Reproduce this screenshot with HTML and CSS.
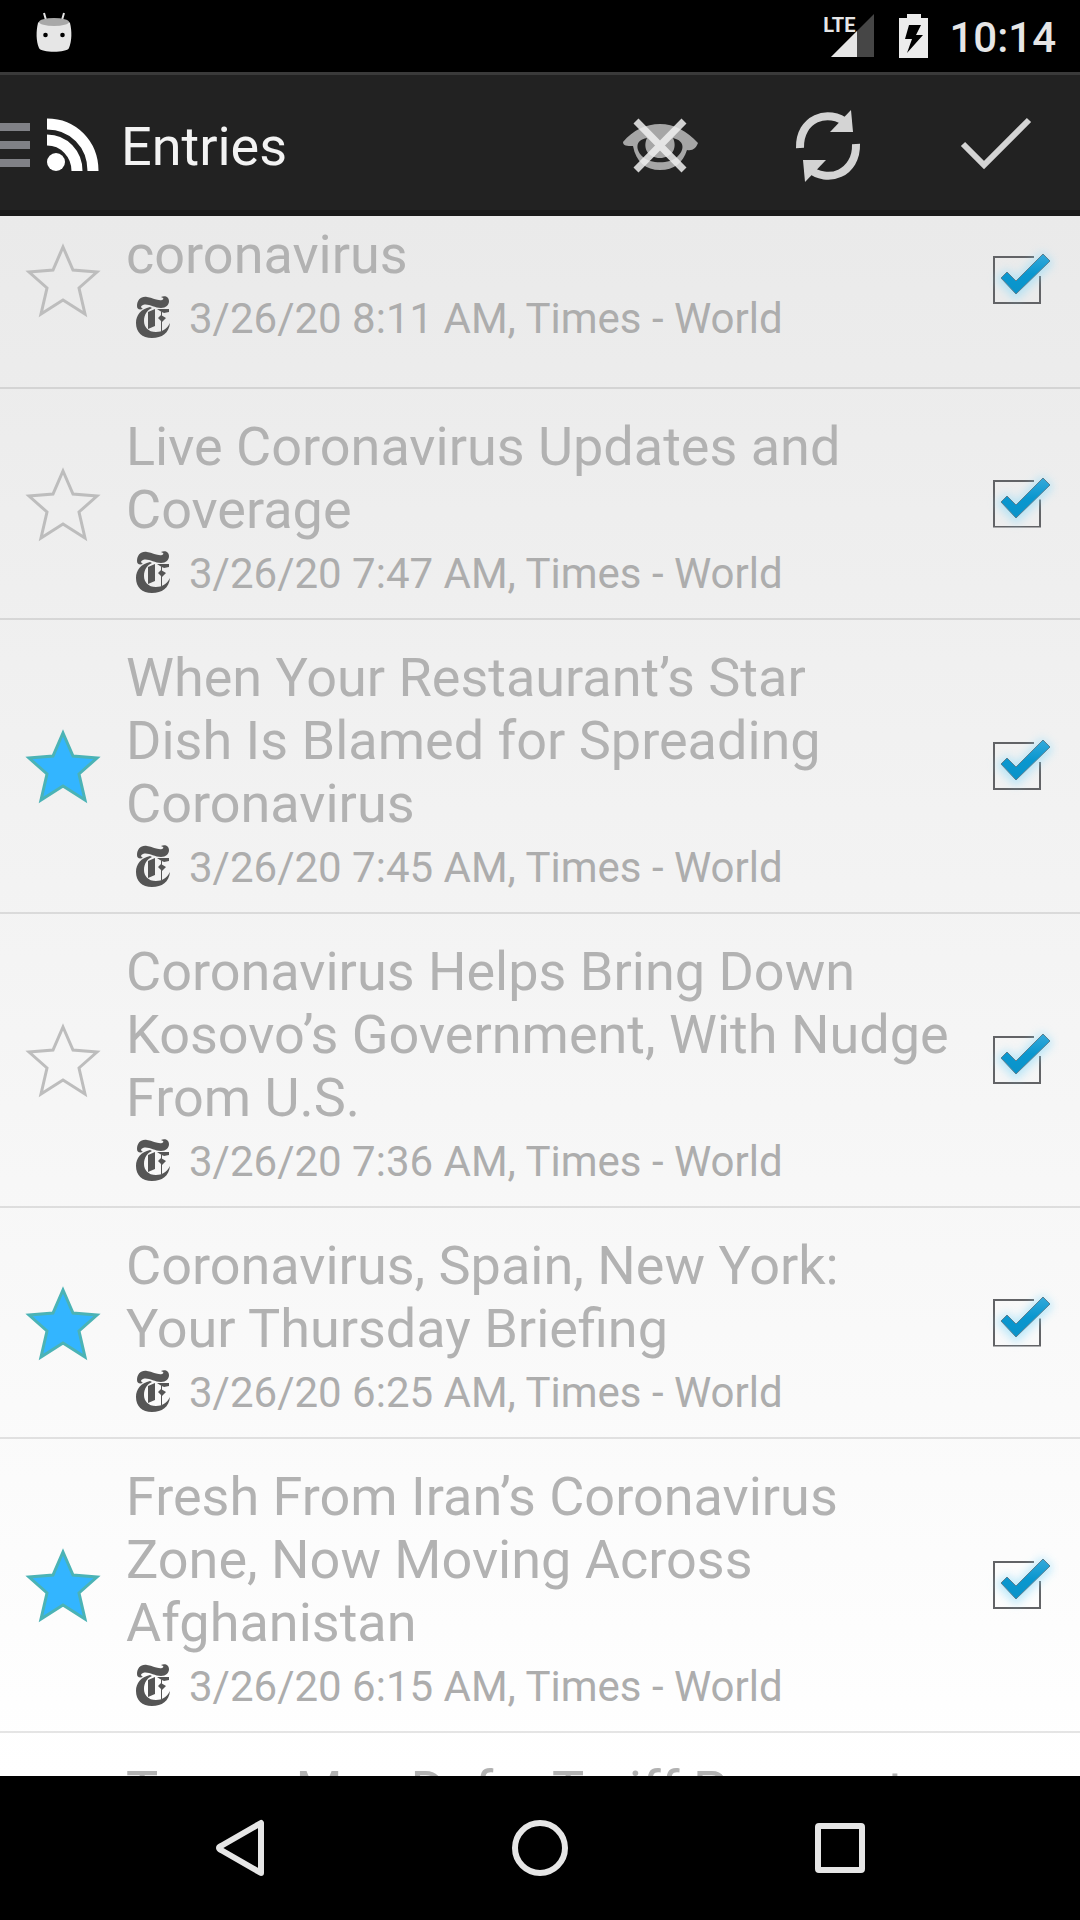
FILE: index.html
```html
<!DOCTYPE html>
<html lang="en">
<head>
<meta charset="utf-8">
<meta name="viewport" content="width=device-width, initial-scale=1">
<title>Entries</title>
<link rel="stylesheet" href="styles.css">
</head>
<body>
<svg class="defs" aria-hidden="true">
  <defs>
    <linearGradient id="tick-fill" x1="0" y1="0" x2="0" y2="1">
      <stop offset="0" stop-color="#35a9da"/><stop offset=".5" stop-color="#0a97cf"/><stop offset="1" stop-color="#0a93c9"/>
    </linearGradient>
    <filter id="glow" x="-50%" y="-50%" width="200%" height="200%"><feGaussianBlur stdDeviation="5"/></filter>
    <symbol id="star" viewBox="0 0 80 78">
      <path d="M40 6 L50 29 L74 31 L56 47 L62 73 L40 59 L18 73 L24 47 L6 31 L30 29 Z"/>
    </symbol>
    <symbol id="tick" viewBox="0 0 84 84">
      <path d="M25 41 L32 35 L41 44 L67 18 L74 25 L41 58 Z" fill="#8fdcfa" stroke="#8fdcfa" stroke-width="6" opacity=".6" filter="url(#glow)"/>
      <path d="M26 40 L32 34 L41 43 L68 16 L75 23 L41 56 Z" fill="url(#tick-fill)" stroke="#5b7f90" stroke-width="1"/>
    </symbol>
    <symbol id="times" viewBox="0 0 36 44">
      <path d="M1 11 C1 5 5 1 11 2 C17 3 22 6 26 5 C28 4 28 3 25 2 C29 0 33 2 33 6 C33 10 30 13 25 13 C18 13 12 8 7 10 C4 11 5 13 7 14 C3 15 1 14 1 11 Z"/>
      <path d="M14 12 C5 14 0 20 0 28 C0 37 6 43 16 43 C26 43 33 38 34 28 C31 34 26 37 20 37 C12 37 8 32 8 26 C8 20 11 15 16 13 Z"/>
      <path d="M12 17 L19 14 L19 31 L12 34 Z M22 23 L25 20 L30 23 L26 27 Z M25 14 h1 v22 h-1 Z M21 14 L33 14 L33 17 L28 18 L24 16 Z"/>
    </symbol>
  </defs>
</svg>
<div class="screen">
  <div class="status">
    <svg class="droid" viewBox="0 0 36 44" aria-label="Debugging">
      <path d="M8 2 L10 9 M28 2 L26 9" stroke="#e4e4e4" stroke-width="2"/>
      <path d="M2 12 C3 8 33 8 34 12 C36 20 36 30 33 37 C31 42 5 42 3 37 C0 30 0 20 2 12 Z" fill="#e6e6e6"/>
      <ellipse cx="18" cy="11" rx="15" ry="4" fill="#a8a8a8"/>
      <circle cx="9.500" cy="24" r="2.300"/><circle cx="26.500" cy="24" r="2.300"/>
    </svg>
    <div class="indicators">
      <div class="signal">
        <span class="lte">LTE</span>
        <svg class="bars" viewBox="0 0 44 44"><path d="M43 0 V43 H0 Z" fill="#464646"/><path d="M26 17 V43 H0 Z" fill="#e6e6e6"/></svg>
      </div>
      <svg class="battery" viewBox="0 0 30 44" aria-label="Charging"><path d="M8 0 H22 V4 H29 V44 H0 V4 H8 Z" fill="#ececec"/><path d="M10 11 H22 L17 21 H24 L8 39 L13 25 H6 Z" fill="#000"/></svg>
      <time class="clock">10:14</time>
    </div>
  </div>
  <header class="bar">
    <button class="drawer" aria-label="Open drawer">
      <svg class="menu" viewBox="0 0 30 44"><path d="M0 4 H30 M0 22 H30 M0 40 H30" stroke="#808186" stroke-width="8"/></svg>
      <svg class="feed" viewBox="0 0 54 56"><g fill="none" stroke="#fff" stroke-width="11"><path d="M1 7 C27 7 47 27 47 54"/><path d="M1 23 C18 23 31 37 31 54"/></g><circle cx="10" cy="45" r="9" fill="#fff"/></svg>
    </button>
    <h1 class="heading">Entries</h1>
    <div class="actions">
      <button class="action" aria-label="Hide read"><svg class="glyph" viewBox="0 0 96 96">
        <path fill="#a6a6a6" fill-rule="evenodd" d="M11 45 C21 33 34 27 48 27 C62 27 75 34 86 46 C84 51 81 54 75 53 C71 66 62 73 48 73 C34 73 24 65 21 49 C15 49 11 49 11 45 Z M35 41 C22 43 24 54 31 60 C38 67 58 67 65 60 C72 54 74 44 61 41 C66 52 59 61 48 61 C37 61 30 52 35 41 Z"/>
        <path d="M24 24 L72 73 M72 24 L24 73" stroke="#f0f0f0" stroke-opacity=".85" stroke-width="7"/></svg></button>
      <button class="action" aria-label="Refresh"><svg class="glyph" viewBox="0 0 96 96">
        <g id="half"><path d="M20 51 C19 22 48 10 68 27" fill="none" stroke="#d4d4d4" stroke-width="8"/><path d="M71 13 L73 35 H50 Z" fill="#d4d4d4"/></g>
        <use href="#half" transform="rotate(180 48 49)"/></svg></button>
      <button class="action" aria-label="Mark all read"><svg class="glyph" viewBox="0 0 96 96"><path d="M15 47 L36 68 L81 23" fill="none" stroke="#d4d4d4" stroke-width="6"/></svg></button>
    </div>
  </header>
  <main class="feedlist">
    <ul class="entries">
      <li class="entry">
        <button class="star" aria-label="Star"><svg><use href="#star"/></svg></button>
        <div class="text"><h2 class="title">coronavirus</h2><p class="meta"><svg class="logo"><use href="#times"/></svg>3/26/20 8:11 AM, Times - World</p></div>
        <label class="check"><input type="checkbox" checked aria-label="Read"><svg><use href="#tick"/></svg></label>
      </li>
      <li class="entry">
        <button class="star" aria-label="Star"><svg><use href="#star"/></svg></button>
        <div class="text"><h2 class="title">Live Coronavirus Updates and<br>Coverage</h2><p class="meta"><svg class="logo"><use href="#times"/></svg>3/26/20 7:47 AM, Times - World</p></div>
        <label class="check"><input type="checkbox" checked aria-label="Read"><svg><use href="#tick"/></svg></label>
      </li>
      <li class="entry">
        <button class="star on" aria-label="Unstar"><svg><use href="#star"/></svg></button>
        <div class="text"><h2 class="title">When Your Restaurant’s Star<br>Dish Is Blamed for Spreading<br>Coronavirus</h2><p class="meta"><svg class="logo"><use href="#times"/></svg>3/26/20 7:45 AM, Times - World</p></div>
        <label class="check"><input type="checkbox" checked aria-label="Read"><svg><use href="#tick"/></svg></label>
      </li>
      <li class="entry">
        <button class="star" aria-label="Star"><svg><use href="#star"/></svg></button>
        <div class="text"><h2 class="title">Coronavirus Helps Bring Down<br>Kosovo’s Government, With Nudge<br>From U.S.</h2><p class="meta"><svg class="logo"><use href="#times"/></svg>3/26/20 7:36 AM, Times - World</p></div>
        <label class="check"><input type="checkbox" checked aria-label="Read"><svg><use href="#tick"/></svg></label>
      </li>
      <li class="entry">
        <button class="star on" aria-label="Unstar"><svg><use href="#star"/></svg></button>
        <div class="text"><h2 class="title">Coronavirus, Spain, New York:<br>Your Thursday Briefing</h2><p class="meta"><svg class="logo"><use href="#times"/></svg>3/26/20 6:25 AM, Times - World</p></div>
        <label class="check"><input type="checkbox" checked aria-label="Read"><svg><use href="#tick"/></svg></label>
      </li>
      <li class="entry">
        <button class="star on" aria-label="Unstar"><svg><use href="#star"/></svg></button>
        <div class="text"><h2 class="title">Fresh From Iran’s Coronavirus<br>Zone, Now Moving Across<br>Afghanistan</h2><p class="meta"><svg class="logo"><use href="#times"/></svg>3/26/20 6:15 AM, Times - World</p></div>
        <label class="check"><input type="checkbox" checked aria-label="Read"><svg><use href="#tick"/></svg></label>
      </li>
      <li class="entry partial">
        <div class="star"></div>
        <div class="text"><h2 class="title">Trump May Defer Tariff Payments</h2></div>
      </li>
    </ul>
  </main>
  <nav class="nav">
    <button class="key" aria-label="Back"><svg viewBox="0 0 60 60"><path d="M51 5 V55 L11 32 Q7 30 11 28 Z"/></svg></button>
    <button class="key" aria-label="Home"><svg viewBox="0 0 60 60"><circle cx="30" cy="30" r="25"/></svg></button>
    <button class="key" aria-label="Recents"><svg viewBox="0 0 60 60"><rect x="8" y="8" width="44" height="44" rx="1"/></svg></button>
  </nav>
</div>
</body>
</html>
```
FILE: styles.css
```css
* { box-sizing: border-box; margin: 0; padding: 0; }
body { font-family: Roboto, sans-serif; background: #000; }
button { background: none; border: 0; display: flex; align-items: center; justify-content: center; }
svg { display: block; flex: none; }
.defs { position: absolute; width: 0; height: 0; }
.screen { display: flex; flex-direction: column; height: 100vh; overflow: hidden; }

.status { display: flex; flex: none; justify-content: space-between; align-items: center; height: 72px; padding: 0 24px 0 36px; }
.droid { width: 36px; height: 44px; margin-bottom: 6px; }
.indicators { display: flex; align-items: center; }
.signal { display: flex; align-items: flex-start; }
.lte { font-size: 20px; line-height: 22px; font-weight: 700; color: #e6e6e6; margin-right: -24px; }
.bars { width: 44px; height: 44px; }
.battery { width: 30px; height: 44px; margin: 0 20px 0 24px; }
.clock { padding-top: 4px; font-size: 42px; line-height: 48px; font-weight: 500; color: #e6e6e6; }

.bar { display: flex; flex: none; align-items: center; height: 144px; padding-top: 5px; background: #222; border-top: 3px solid #3a3a3a; border-bottom: 6px solid #1a1a1a; }
.drawer { gap: 16px; }
.menu { width: 30px; height: 44px; }
.feed { width: 54px; height: 56px; }
.heading { flex: 1; padding: 4px 0 0 21px; font-size: 54px; line-height: 64px; font-weight: 400; color: #f3f3f3; }
.actions { display: flex; }
.action { width: 168px; height: 126px; }
.glyph { width: 96px; height: 96px; }

.feedlist { flex: 1; min-height: 0; overflow: hidden; background: linear-gradient(#eaeaea, #fff); }
.entries { list-style: none; margin-top: -43px; }
.entry { display: flex; align-items: center; min-height: 216px; padding-right: 21px; border-bottom: 2px solid rgba(0, 0, 0, 0.1); }
.partial { align-items: flex-start; }
.star { flex: none; width: 126px; }
.star svg { width: 80px; height: 78px; fill: none; stroke: #bdbdbd; stroke-width: 3; }
.star.on svg { fill: #33b5ff; stroke: #4bb3b5; }
.text { flex: 1; min-width: 0; padding: 26px 0 20px; }
.title { font-size: 54px; line-height: 63px; font-weight: 400; color: #b2b2b2; white-space: nowrap; }
.meta { display: flex; align-items: center; gap: 17px; margin-top: 8px; padding-left: 10px; font-size: 42px; line-height: 49px; color: #adadad; white-space: nowrap; }
.logo { width: 36px; height: 44px; margin-bottom: 3px; fill: #555; }
.check { position: relative; flex: none; width: 84px; height: 84px; padding: 18px; }
.check input { display: block; appearance: none; width: 48px; height: 48px; border: 2px solid #626366; clip-path: polygon(0 0, 41px 0, 41px 20px, 48px 20px, 48px 48px, 0 48px); }
.check svg { position: absolute; inset: 0; width: 84px; height: 84px; }

.nav { display: flex; flex: none; justify-content: center; align-items: center; height: 144px; background: #000; }
.key { width: 300px; height: 144px; }
.key svg { width: 60px; height: 60px; fill: none; stroke: #e6e6e6; stroke-width: 6; stroke-linejoin: round; }
```
